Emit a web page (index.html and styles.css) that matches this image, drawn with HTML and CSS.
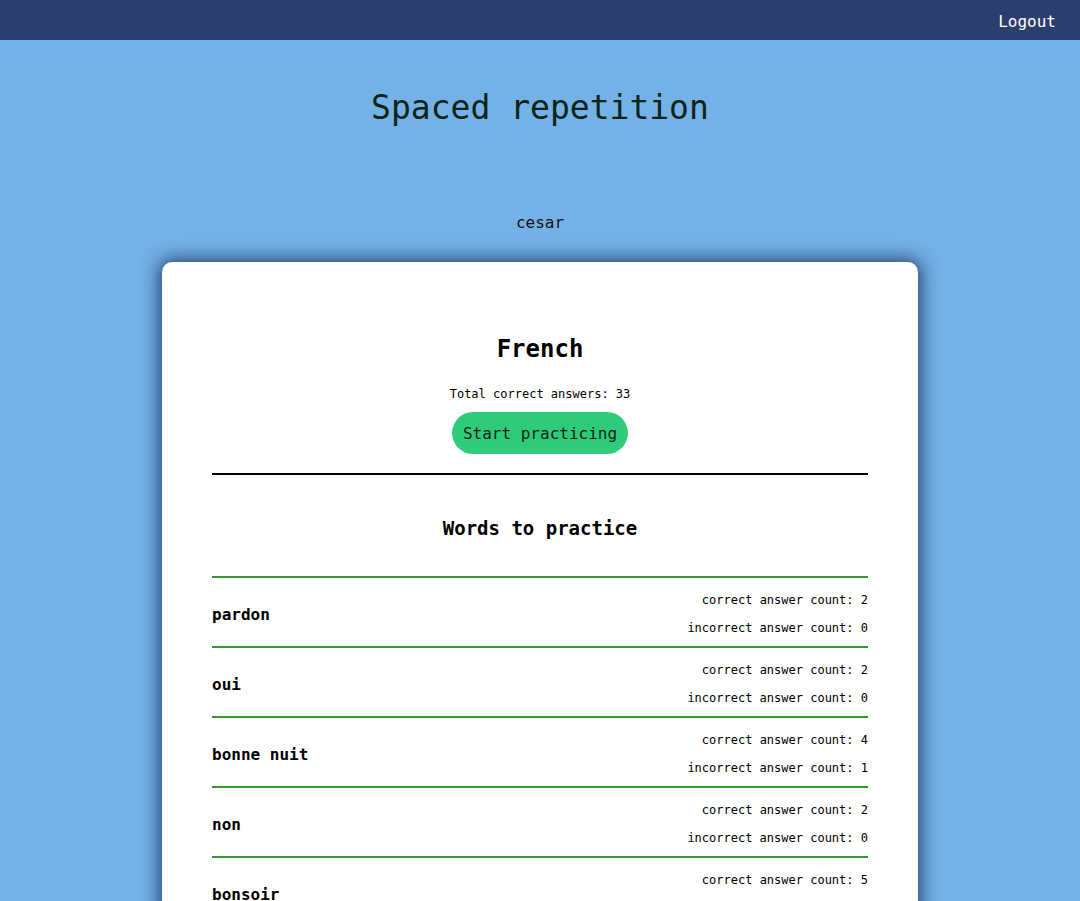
FILE: index.html
```html
<!DOCTYPE html>
<html lang="en">
<head>
<meta charset="utf-8">
<title>Spaced repetition</title>
<link rel="stylesheet" href="styles.css">
</head>
<body>
<header class="topbar">
  <button class="logout">Logout</button>
</header>
<main class="main">
  <h1 class="title">Spaced repetition</h1>
  <p class="user">cesar</p>
  <section class="card">
    <h2 class="lang">French</h2>
    <p class="total">Total correct answers: 33</p>
    <button class="start">Start practicing</button>
    <hr class="divider">
    <h3 class="words-title">Words to practice</h3>
    <ul class="words">
      <li class="word-row">
        <span class="word">pardon</span>
        <div class="counts"><span>correct answer count: 2</span><span>incorrect answer count: 0</span></div>
      </li>
      <li class="word-row">
        <span class="word">oui</span>
        <div class="counts"><span>correct answer count: 2</span><span>incorrect answer count: 0</span></div>
      </li>
      <li class="word-row">
        <span class="word">bonne nuit</span>
        <div class="counts"><span>correct answer count: 4</span><span>incorrect answer count: 1</span></div>
      </li>
      <li class="word-row">
        <span class="word">non</span>
        <div class="counts"><span>correct answer count: 2</span><span>incorrect answer count: 0</span></div>
      </li>
      <li class="word-row">
        <span class="word">bonsoir</span>
        <div class="counts"><span>correct answer count: 5</span><span>incorrect answer count: 0</span></div>
      </li>
    </ul>
  </section>
</main>
</body>
</html>
```

FILE: styles.css
```css
html, body {
  margin: 0;
  padding: 0;
}
body {
  background: #74b1e6;
  font-family: "DejaVu Sans Mono", "Liberation Mono", monospace;
  color: #111;
  height: 901px;
  overflow: hidden;
}
.topbar {
  height: 40px;
  background: #2c3e6d;
  display: flex;
  justify-content: flex-end;
  align-items: center;
  padding-right: 24px;
}
.logout {
  background: none;
  border: none;
  padding: 0;
  color: #fff;
  font-family: "DejaVu Sans Mono", monospace;
  font-size: 16px;
  line-height: 20px;
  margin-top: 3px;
  cursor: pointer;
}
.main {
  display: flex;
  flex-direction: column;
  align-items: center;
}
.title {
  margin: 48px 0 0;
  font-size: 33px;
  line-height: 40px;
  font-weight: normal;
  color: #0b2416;
}
.user {
  margin: 85px 0 0;
  font-size: 16px;
  line-height: 20px;
  color: #111;
}
.card {
  margin-top: 29px;
  width: 756px;
  box-sizing: border-box;
  background: #fff;
  border-radius: 10px;
  box-shadow: 0 0 18px 3px rgba(15, 40, 80, 0.8);
  padding: 72px 50px 40px;
  display: flex;
  flex-direction: column;
  align-items: center;
}
.lang {
  margin: 0;
  font-size: 24px;
  line-height: 30px;
  font-weight: bold;
  color: #000;
}
.total {
  margin: 22px 0 0;
  font-size: 12px;
  line-height: 16px;
  color: #000;
}
.start {
  margin-top: 10px;
  height: 42px;
  padding: 0 11px;
  border: none;
  border-radius: 21px;
  background: #2ecc7a;
  color: #0e1f14;
  font-family: "DejaVu Sans Mono", monospace;
  font-size: 16px;
  cursor: pointer;
}
.divider {
  align-self: stretch;
  margin: 19px 0 0;
  border: none;
  height: 2px;
  background: #000;
}
.words-title {
  margin: 41px 0 0;
  font-size: 19px;
  line-height: 24px;
  font-weight: bold;
  color: #000;
}
.words {
  align-self: stretch;
  list-style: none;
  margin: 36px 0 0;
  padding: 0;
}
.word-row {
  border-top: 2px solid #339933;
  padding: 14px 0 10px;
  display: flex;
  justify-content: space-between;
  align-items: center;
}
.word {
  font-size: 16px;
  font-weight: bold;
  color: #000;
}
.counts {
  display: flex;
  flex-direction: column;
  align-items: flex-end;
  gap: 12px;
  font-size: 12px;
  line-height: 16px;
  color: #000;
}
```
